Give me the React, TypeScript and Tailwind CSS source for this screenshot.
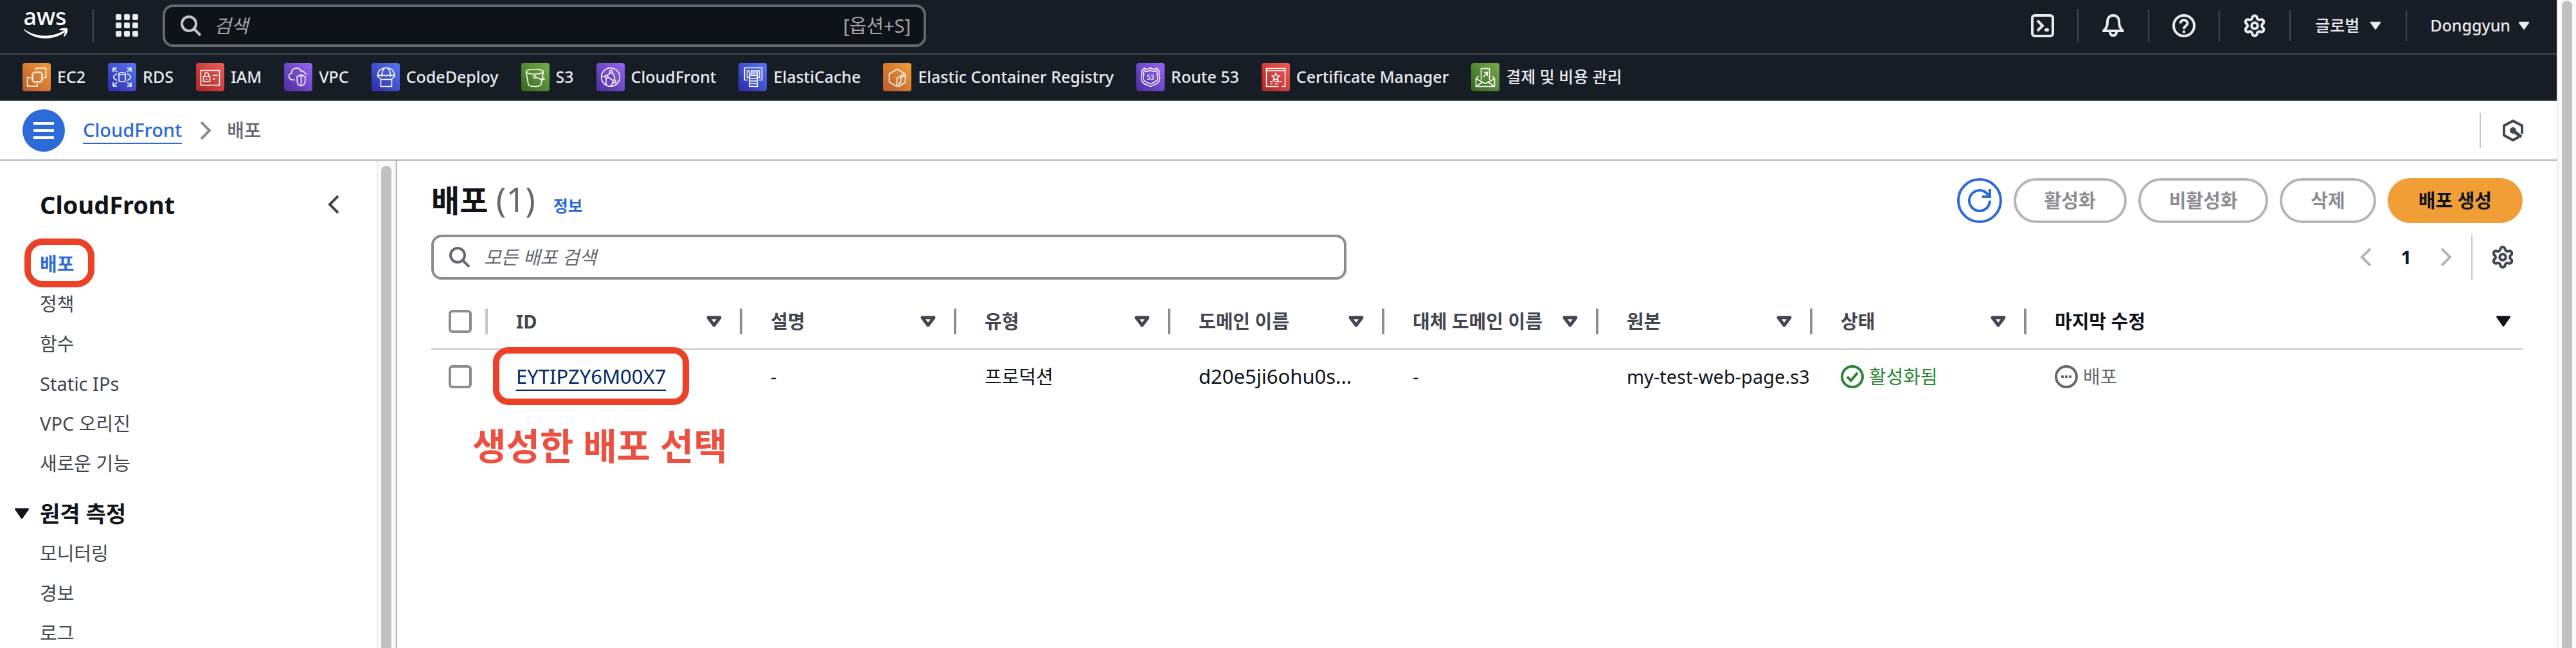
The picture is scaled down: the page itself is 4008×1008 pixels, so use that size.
import { ReactNode } from "react"
import { Settings } from "lucide-react"

const line = { fill: "none", stroke: "#fff", strokeWidth: 1.6 }

function Tile({ id, from, to, children }: { id: string; from: string; to: string; children: ReactNode }) {
  return (
    <svg viewBox="0 0 44 44" className="size-11 shrink-0" aria-hidden="true">
      <defs>
        <linearGradient id={id} x1="0" y1="1" x2="1" y2="0">
          <stop offset="0" stopColor={from} />
          <stop offset="1" stopColor={to} />
        </linearGradient>
      </defs>
      <rect width="44" height="44" rx="4" fill={`url(#${id})`} />
      <g {...line}>{children}</g>
    </svg>
  )
}

const orange = { from: "#bd5a2c", to: "#f19d37" }
const blue = { from: "#2c2aa5", to: "#5678f6" }
const red = { from: "#ae2421", to: "#ec5f58" }
const purple = { from: "#4b2b9e", to: "#9767f4" }
const green = { from: "#33671e", to: "#79ab4d" }

const favorites = [
  {
    name: "EC2",
    icon: (
      <Tile id="ec2" {...orange}>
        <path d="M21 11V8h15.500v15H33M13 23H7.500v13H23v-5" />
        <rect x="16" y="15" width="14" height="14" rx="1.500" />
        <path d="M19 12.500V15m4-2.500V15m4-2.500V15M19 29v2.500m4-2.500v2.500m4-2.500v2.500M13.500 18H16m-2.500 4H16m-2.500 4H16M30 18h2.500M30 22h2.500M30 26h2.500" />
      </Tile>
    ),
  },
  {
    name: "RDS",
    icon: (
      <Tile id="rds" {...blue}>
        <path d="M8 14V8h6M8 8l6 6M30 8h6v6m0-6-6 6M8 30v6h6m-6 0 6-6m16 6h6v-6m0 6-6-6M14 17c-7 3-7 7 0 10m16-10c7 3 7 7 0 10" />
        <ellipse cx="22" cy="16.500" rx="5" ry="1.700" />
        <path d="M17 16.500v11c0 2.300 10 2.300 10 0v-11" />
      </Tile>
    ),
  },
  {
    name: "IAM",
    icon: (
      <Tile id="iam" {...red}>
        <rect x="7.500" y="11.500" width="29" height="23" />
        <rect x="11.500" y="21" width="10" height="8" />
        <path d="M13.500 21v-3c0-4 6-4 6 0v3M16.500 24v2.500M26 19.300h7.500M26 25h3.500" />
      </Tile>
    ),
  },
  {
    name: "VPC",
    icon: (
      <Tile id="vpc" {...purple}>
        <path d="M16.500 26.300C11 27 7.500 24.500 7.500 21c0-3 2.500-5 4.500-5.300C11 10.500 15.500 8 19.500 8c4 0 6 2 7 5 2.500-1.500 5 0 5 2.500 2 .200 3.500 1.500 4 2.500" />
        <path d="M26.500 18.500c2 1.500 4.500 2 6.300 2.200v6.300c0 5-2.500 8-6.300 8.700-3.800-.700-6.300-3.700-6.300-8.700v-6.300c1.800-.200 4.300-.700 6.300-2.200zv17" />
      </Tile>
    ),
  },
  {
    name: "CodeDeploy",
    icon: (
      <Tile id="codedeploy" {...blue}>
        <path d="M9.500 20.500C9.500 12 15 7.500 22.700 7.500S36 12 36 20.500c-2-2-4.500-2-6.500 0-2-2-4.500-2-6.800 0-2.300-2-4.800-2-6.800 0-2-2-4.400-2-6.400 0zM16 20.500c0-6 2-11 5-13m8.500 13c0-6-2-11-5-13M9.500 20.500l5 4.500m21.500-4.500-4.500 4.500" />
        <rect x="14.500" y="25.500" width="17" height="11" />
      </Tile>
    ),
  },
  {
    name: "S3",
    icon: (
      <Tile id="s3" {...green}>
        <ellipse cx="21" cy="13.500" rx="13.500" ry="3.800" />
        <path d="M7.500 13.500l3.700 20.500c2.500 3.300 17 3.300 19.500 0l3.800-20.500M22.800 22.300c5 2.500 9 3.500 13 3.500 0-1.500-1-2.500-3-3" />
        <circle cx="20.800" cy="21.700" r="2" />
      </Tile>
    ),
  },
  {
    name: "CloudFront",
    icon: (
      <Tile id="cloudfront" {...purple}>
        <circle cx="22" cy="22" r="14.300" />
        <circle cx="23" cy="13.500" r="2.300" />
        <circle cx="15.500" cy="21" r="2.300" />
        <circle cx="28" cy="28.500" r="2.300" />
        <path d="M21.300 15.300l-4 4M25 15.500c2.500 3 3.500 6.500 3.300 10.500M17.800 22l8 5.200M13.200 21H8M15.500 23.500c-1 3.500-1 8 .500 11M26 30.500c-2 1.500-3 3-3.500 5.500" />
      </Tile>
    ),
  },
  {
    name: "ElastiCache",
    icon: (
      <Tile id="elasticache" {...blue}>
        <path d="M14 26.500H9.500v-19h27v19H32M17 22.500h-3.500V12h3.500v5h3v-5h2.500v5h2v-5h3v5h2.500v-5H33v10.500h-3" />
        <path fill="#4158d0" d="M17 19.500h12.500v17H17zM17 24h12.500M17 28h12.500M17 32h12.500" />
      </Tile>
    ),
  },
  {
    name: "Elastic Container Registry",
    icon: (
      <Tile id="ecr" {...orange}>
        <path d="M33.500 16.500L22 9.500 9.500 17v12.500l12 7V23.500zM34.500 19l-7 4v7l-3 2v4.500l10-6.500z" />
      </Tile>
    ),
  },
  {
    name: "Route 53",
    icon: (
      <Tile id="route53" {...purple}>
        <path d="M12.500 8l4 2.300 5.500-2.600 5.500 2.600 4-2.300 4.500 5c-1.500 4-1 6 .300 9 1.500 6.500-4.500 11-8.300 12l-6 2.500-6-2.500c-3.800-1-9.800-5.500-8.300-12 1.300-3 1.800-5 .300-9z" />
        <path d="M13 12l3.700 1.700 5.300-2.300 5.300 2.300L31 12l1.700 2c-.700 3-.500 5.500.600 8 .800 4-2.800 7-6.300 8.500l-5 2.200-5-2.200c-3.500-1.500-7.100-4.500-6.300-8.500 1.100-2.500 1.300-5 .600-8z" />
        <text x="22" y="26" textAnchor="middle" className="fill-white stroke-none font-['Noto_Sans',sans-serif] text-[10px]">53</text>
      </Tile>
    ),
  },
  {
    name: "Certificate Manager",
    icon: (
      <Tile id="acm" {...red}>
        <path d="M26 36.500H7.500v-28h29v28H31M7.500 12h29M13 29h4m3 0h11M13 32.500h4m3 0h6" />
        <path d="M22 16l1.800 3.800 4 .400-3 2.800.900 4.200-3.700-2.200-3.700 2.200.900-4.200-3-2.800 4-.400z" />
      </Tile>
    ),
  },
  {
    name: "결제 및 비용 관리",
    icon: (
      <Tile id="billing" {...green}>
        <path d="M15.500 26V8.500h13V26M12 20l-4.500 4v12.500h29V24L32 20M7.500 24.500L22 32l14.500-7.500M7.500 36.500L18 29.500m18.500 7L26 29.500M19 22l6-7.500m-5 0h5.200V20" />
      </Tile>
    ),
  },
]

const mainLinks = ["배포", "정책", "함수", "Static IPs", "VPC 오리진", "새로운 기능"]
const telemetryLinks = ["모니터링", "경보", "로그"]
const columns = ["ID", "설명", "유형", "도메인 이름", "대체 도메인 이름", "원본", "상태", "마지막 수정"]

function SearchIcon({ className }: { className: string }) {
  return (
    <svg viewBox="0 0 32 32" className={`size-8 shrink-0 ${className}`} fill="none" stroke="currentColor" strokeWidth="4">
      <circle cx="13" cy="13" r="11" />
      <path d="M21 21l10 10" />
    </svg>
  )
}

function Caret({ className }: { className: string }) {
  return (
    <svg viewBox="0 0 24 18" className={`shrink-0 ${className}`} fill="currentColor" stroke="currentColor" strokeWidth="3" strokeLinejoin="round">
      <path d="M2.500 2h19L12 15.500z" />
    </svg>
  )
}

function Chevron({ left, className }: { left?: boolean; className: string }) {
  return (
    <svg viewBox="0 0 18 30" className={`shrink-0 ${className}`} fill="none" stroke="currentColor" strokeWidth="4">
      <path d={left ? "M16 2L3 15l13 13" : "M2 2l13 13L2 28"} />
    </svg>
  )
}

function TopBar() {
  return (
    <header className="bg-[#171d25] text-[#ebebf0]">
      <div className="flex h-[85px] items-center justify-between border-b-2 border-[#424650] pb-1">
        <div className="flex items-center">
          <a href="#" aria-label="AWS" className="ml-9 mr-9">
            <svg viewBox="0 -16 72 78" className="h-[78px] w-[72px]" fill="#fff">
              <text x="34" y="22" textAnchor="middle" className="font-['Noto_Sans',sans-serif] text-[36px] font-medium">aws</text>
              <path d="M1 28c18 13 42 14 62 3l2 2C46 47 18 46 1 29.500z" />
              <path d="M56 29c5-3 11-3 13-1 1 3-1 9-5 12l-1-1c2-4 2-6 1-8-2-1-5-1-8-1z" />
            </svg>
          </a>
          <div className="h-[52px] w-0.5 bg-[#424650]"></div>
          <button aria-label="서비스" className="ml-[34px] mr-[38px]">
            <svg viewBox="0 0 35 35" className="size-[35px]" fill="currentColor">
              {[0, 13, 26].map((y) => [0, 13, 26].map((x) => <rect key={`${x}-${y}`} x={x} y={y} width="9" height="9" rx="2" />))}
            </svg>
          </button>
          <label className="flex h-[66px] w-[1188px] items-center rounded-2xl border-4 border-[#656871] bg-[#0f1217] px-5 text-[29px]">
            <SearchIcon className="mx-1 text-[#c6c6cd]" />
            <input type="text" aria-label="검색" placeholder="검색" className="ml-4 min-w-0 flex-1 italic outline-none placeholder:text-[#a4a4ad]" />
            <span className="text-[#a4a4ad]">[옵션+S]</span>
          </label>
        </div>
        <div className="flex items-center">
          <button aria-label="CloudShell" className="px-9">
            <svg viewBox="0 0 36 36" className="size-9" fill="none" stroke="currentColor" strokeWidth="4">
              <rect x="2" y="2" width="32" height="32" rx="4" />
              <path d="M10 10l8 8-8 8" />
              <rect x="22" y="23" width="5" height="3" rx="1" strokeWidth="2" fill="currentColor" />
            </svg>
          </button>
          <button aria-label="알림" className="flex h-[52px] items-center border-l-2 border-[#424650] px-9">
            <svg viewBox="0 0 36 36" className="size-9" fill="none" stroke="currentColor" strokeWidth="4" strokeLinejoin="round">
              <path d="M18 2c-6 0-9 4-9 10 0 7-2 10-6 14h30c-4-4-6-7-6-14 0-6-3-10-9-10z" />
              <path d="M13 28c0 7 10 7 10 0" />
            </svg>
          </button>
          <button aria-label="지원" className="flex h-[52px] items-center border-l-2 border-[#424650] px-9">
            <svg viewBox="0 0 36 36" className="size-9" fill="none" stroke="currentColor" strokeWidth="4">
              <circle cx="18" cy="18" r="16" />
              <path d="M12.500 14.500c0-7 11-7 11 0 0 4-5.500 3.500-5.500 8.500M18 25.500v4" />
            </svg>
          </button>
          <button aria-label="설정" className="flex h-12 items-center border-l-2 border-[#424650] px-[35px]">
            <Settings className="size-[38px]" strokeWidth={2.6} />
          </button>
          <button className="flex h-12 items-center gap-4 border-l-2 border-[#424650] px-[38px] text-[25px] font-medium">
            글로벌 <Caret className="h-3.5 w-[18px]" />
          </button>
          <button className="flex h-12 items-center gap-3 border-l-2 border-[#424650] pl-9 pr-[42px] text-[25px] font-medium">
            Donggyun <Caret className="h-3.5 w-[18px]" />
          </button>
        </div>
      </div>
      <nav className="flex h-[72px] items-center gap-[35px] border-b-2 border-[#424650] px-[35px] text-[25px] font-medium">
        {favorites.map((f) => (
          <a key={f.name} href="#" className="flex items-center gap-2.5 whitespace-nowrap">
            {f.icon}
            {f.name}
          </a>
        ))}
      </nav>
    </header>
  )
}

function Breadcrumbs() {
  return (
    <div className="flex h-[93px] items-center justify-between border-b-2 border-[#b4b4bb] pl-[35px] pr-[50px] text-[29px]">
      <div className="flex items-center">
        <button aria-label="메뉴" className="flex size-[66px] items-center justify-center rounded-full bg-[#2c69d9]">
          <svg viewBox="0 0 32 28" className="h-7 w-8" fill="none" stroke="#fff" strokeWidth="4">
            <path d="M0 3h32M0 14h32M0 25h32" />
          </svg>
        </button>
        <a href="#" className="ml-7 border-b-2 border-[#2c69d9] font-medium leading-10 text-[#2c69d9]">CloudFront</a>
        <Chevron className="ml-7 h-[30px] w-[18px] text-[#8c8c94]" />
        <span className="ml-6 font-medium text-[#656871]">배포</span>
      </div>
      <div className="flex items-center">
        <div className="h-[54px] w-0.5 bg-[#c6c6cd]"></div>
        <button aria-label="개요" className="ml-8">
          <svg viewBox="0 0 36 36" className="size-9" fill="none" stroke="#424650" strokeWidth="4">
            <path d="M32 23V10.500L18 3 4 10.500v15L18 33l9-5" />
            <circle cx="18" cy="18" r="3" fill="#424650" />
            <path d="M19 19l12 9" strokeWidth="5" />
          </svg>
        </button>
      </div>
    </div>
  )
}

function SideNav() {
  return (
    <aside className="flex w-[618px] shrink-0 overflow-hidden border-r-2 border-[#b4b4bb]">
      <div className="min-w-0 flex-1">
        <div className="flex items-center justify-between pl-[62px] pr-[58px] pt-10">
          <h2 className="text-[38px] font-bold leading-[56px] text-[#0f141a]">CloudFront</h2>
          <button aria-label="닫기"><Chevron left className="h-[30px] w-[18px] text-[#424650]" /></button>
        </div>
        <ul className="mt-[34px] pl-[62px] text-[29px] leading-[62px] text-[#424650]">
          {mainLinks.map((name, i) => (
            <li key={name} className="h-[62px]">
              {i === 0 ? (
                <a href="#" className="relative inline-block font-bold leading-10 text-[#2c69d9]">
                  {name}
                  <span className="absolute -bottom-4 -left-6 -right-8 -top-5 rounded-[28px] border-[10px] border-[#eb4127]"></span>
                </a>
              ) : (
                <a href="#">{name}</a>
              )}
            </li>
          ))}
        </ul>
        <button className="mt-4 flex items-center gap-4 pl-[22px] text-[34px] font-bold leading-[62px] text-[#0f141a]">
          <Caret className="h-[18px] w-6" />
          원격 측정
        </button>
        <ul className="pl-[62px] text-[29px] leading-[62px] text-[#424650]">
          {telemetryLinks.map((name) => (
            <li key={name}><a href="#">{name}</a></li>
          ))}
        </ul>
      </div>
      <div className="w-[30px] border-x-2 border-[#ececec] bg-[#fafafa] pl-[5px] pt-2">
        <div className="h-full w-4 rounded-t-full bg-[#c1c1c1]"></div>
      </div>
    </aside>
  )
}

function Toolbar() {
  const disabled = "h-[70px] rounded-full border-4 border-[#b4b4bb] px-11 font-bold text-[#8c8c94]"
  return (
    <>
      <div className="flex h-[70px] items-center justify-between">
        <div className="flex items-baseline">
          <h1 className="text-[48px] font-bold leading-[70px] text-[#0f141a]">
            배포 <span className="text-[52px] font-normal leading-none text-[#656871]">(1)</span>
          </h1>
          <a href="#" className="ml-7 text-[25px] font-bold text-[#2c69d9]">정보</a>
        </div>
        <div className="flex gap-[18px] text-[29px]">
          <button aria-label="새로 고침" className="flex size-[70px] items-center justify-center rounded-full border-4 border-[#2c69d9]">
            <svg viewBox="0 0 36 36" className="size-9" fill="none" stroke="#2c69d9" strokeWidth="4">
              <path d="M34 18a16 16 0 1 1-4-10.500l3.500 4" />
              <path d="M34 0v12H22" />
            </svg>
          </button>
          <button disabled className={disabled}>활성화</button>
          <button disabled className={disabled}>비활성화</button>
          <button disabled className={disabled}>삭제</button>
          <button className="h-[70px] rounded-full bg-[#f19e37] px-12 font-bold text-[#0f141a]">배포 생성</button>
        </div>
      </div>
      <div className="mt-[18px] flex items-center justify-between">
        <label className="flex h-[70px] w-[1424px] items-center rounded-2xl border-4 border-[#8c8c94] px-6 text-[29px]">
          <SearchIcon className="text-[#656871]" />
          <input type="text" aria-label="모든 배포 검색" placeholder="모든 배포 검색" className="ml-[22px] min-w-0 flex-1 italic outline-none placeholder:text-[#656871]" />
        </label>
        <div className="flex items-center text-[29px]">
          <button aria-label="이전"><Chevron left className="h-[30px] w-[18px] text-[#b4b4bb]" /></button>
          <span className="mx-[45px] font-bold text-[#0f141a]">1</span>
          <button aria-label="다음"><Chevron className="h-[30px] w-[18px] text-[#b4b4bb]" /></button>
          <div className="ml-[30px] h-[70px] w-0.5 bg-[#c6c6cd]"></div>
          <button aria-label="기본 설정" className="ml-7 mr-3 text-[#424650]"><Settings className="size-[38px]" strokeWidth={2.6} /></button>
        </div>
      </div>
    </>
  )
}

function DistributionTable() {
  return (
    <table className="mt-[22px] w-full table-fixed border-collapse text-left text-[29px] text-[#0f141a]">
      <colgroup>
        <col className="w-[88px]" />
        <col className="w-[396px]" />
        <col className="w-[333px]" />
        <col className="w-[333px]" />
        <col className="w-[333px]" />
        <col className="w-[333px]" />
        <col className="w-[333px]" />
        <col className="w-[333px]" />
        <col />
      </colgroup>
      <thead>
        <tr className="h-[86px] border-b-2 border-[#c6c6cd]">
          <th className="p-0 pl-[27px]">
            <div className="flex h-10 items-center border-r-4 border-[#c6c6cd]">
              <input type="checkbox" aria-label="모두 선택" className="size-9 appearance-none rounded-md border-4 border-[#8c8c94]" />
            </div>
          </th>
          {columns.map((name, i) => {
            const last = i === columns.length - 1
            return (
              <th key={name} className="p-0">
                <div className={last ? "flex h-10 items-center justify-between pl-11 pr-[18px]" : "flex h-10 items-center justify-between border-r-4 border-[#8c8c94] pl-11 pr-7 text-[#424650]"}>
                  <span className="whitespace-nowrap font-bold">{name}</span>
                  {last ? (
                    <Caret className="h-[18px] w-6" />
                  ) : (
                    <svg viewBox="0 0 24 18" className="h-[18px] w-6" fill="none" stroke="currentColor" strokeWidth="5" strokeLinejoin="round">
                      <path d="M3 3h18l-9 12z" />
                    </svg>
                  )}
                </div>
              </th>
            )
          })}
        </tr>
      </thead>
      <tbody>
        <tr className="h-[84px] whitespace-nowrap">
          <td className="p-0 pl-[27px]">
            <input type="checkbox" aria-label="EYTIPZY6M00X7 선택" className="block size-9 appearance-none rounded-md border-4 border-[#8c8c94]" />
          </td>
          <td className="p-0 pl-11 text-[31px]">
            <a href="#" className="relative border-b-2 border-[#002b66] text-[#002b66]">
              EYTIPZY6M00X7
              <span className="absolute -inset-x-9 -inset-y-6 rounded-3xl border-[10px] border-[#eb4127]"></span>
            </a>
          </td>
          <td className="p-0 pl-11">-</td>
          <td className="p-0 pl-11">프로덕션</td>
          <td className="p-0 pl-11 text-[31px]">d20e5ji6ohu0s...</td>
          <td className="p-0 pl-11">-</td>
          <td className="overflow-hidden p-0 pl-11">my-test-web-page.s3</td>
          <td className="p-0 pl-11">
            <div className="flex items-center gap-2 text-[#2b8535]">
              <svg viewBox="0 0 36 36" className="size-9" fill="none" stroke="currentColor" strokeWidth="4">
                <circle cx="18" cy="18" r="16" />
                <path d="M10 18l6 6 10-12" />
              </svg>
              활성화됨
            </div>
          </td>
          <td className="p-0 pl-11">
            <div className="flex items-center gap-2 text-[#656871]">
              <svg viewBox="0 0 36 36" className="size-9" fill="none" stroke="currentColor" strokeWidth="4">
                <circle cx="18" cy="18" r="16" />
                <path d="M10 18h4m2 0h4m2 0h4" />
              </svg>
              배포
            </div>
          </td>
        </tr>
      </tbody>
    </table>
  )
}

export default function App() {
  return (
    <div className="flex h-screen overflow-hidden bg-white font-['Noto_Sans','Noto_Sans_CJK_KR',sans-serif]">
      <div className="flex min-w-0 flex-1 flex-col">
        <TopBar />
        <Breadcrumbs />
        <div className="flex min-h-0 flex-1">
          <SideNav />
          <main className="min-w-0 flex-1 pl-[53px] pr-[53px] pt-[27px]">
            <Toolbar />
            <DistributionTable />
            <p className="ml-16 mt-[22px] text-[57px] font-bold leading-[88px] text-[#ed5040]">생성한 배포 선택</p>
          </main>
        </div>
      </div>
      <div className="w-[30px] shrink-0 border-l-2 border-[#ececec] bg-[#fafafa] pl-1.5 pt-px">
        <div className="h-full w-4 rounded-t-full bg-[#c1c1c1]"></div>
      </div>
    </div>
  )
}
